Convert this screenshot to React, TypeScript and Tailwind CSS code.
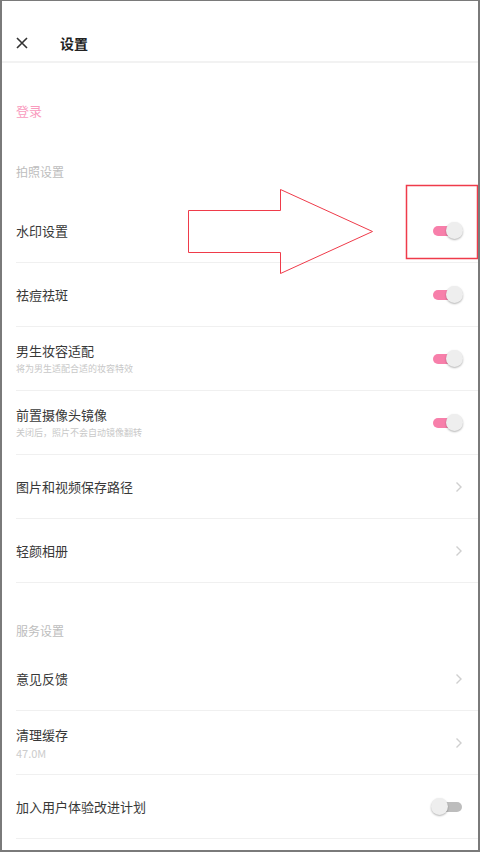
import React from "react";

const font = { fontFamily: '"Noto Sans CJK SC", "Noto Sans", sans-serif' };

function Toggle({ on }: { on: boolean }) {
  return (
    <div className="relative w-[32px] h-[18px] flex items-center">
      <div
        className={
          on
            ? "absolute left-[2px] right-[2px] h-[10px] rounded-full bg-[#f77faa]"
            : "absolute left-[4px] right-[1px] h-[10px] rounded-full bg-[#bdbdbd]"
        }
      />
      <div
        className={
          on
            ? "absolute right-[0px] w-[17px] h-[17px] rounded-full bg-[#eeeeee] shadow-[0_1px_2px_rgba(0,0,0,0.3)]"
            : "absolute left-[0px] w-[17px] h-[17px] rounded-full bg-[#eeeeee] shadow-[0_1px_2px_rgba(0,0,0,0.3)]"
        }
      />
    </div>
  );
}

function Chevron() {
  return (
    <svg width="8" height="12" viewBox="0 0 8 12" fill="none">
      <path d="M1.5 1.5 L6 6 L1.5 10.5" stroke="#cfcfcf" strokeWidth="1.4" />
    </svg>
  );
}

function Row({
  title,
  sub,
  subBig,
  right,
}: {
  title: string;
  sub?: string;
  subBig?: boolean;
  right: React.ReactNode;
}) {
  return (
    <div className="h-[64px] ml-[14px] border-b border-[#f0f0f0] flex items-center justify-between pr-[15px]">
      <div className="flex flex-col">
        <span className="text-[13px] leading-[18px] text-[#383838]">{title}</span>
        {sub && (
          <span
            className={
              subBig
                ? "text-[11px] leading-[14px] mt-[2px] text-[#cccccc]"
                : "text-[9px] leading-[14px] mt-[2px] text-[#c8c8c8]"
            }
          >
            {sub}
          </span>
        )}
      </div>
      {right}
    </div>
  );
}

export default function App() {
  return (
    <div
      className="relative w-[480px] h-[852px] bg-white border-l-2 border-r-2 border-t border-b-2 border-[#7a7a7a] overflow-hidden"
      style={font}
    >
      {/* header */}
      <div className="h-[62px] pt-[23px] border-b-2 border-[#f2f2f2]">
        <div className="h-[38px] flex items-center pl-[13px]">
          <svg width="14" height="14" viewBox="0 0 14 14">
            <path d="M2 2 L12 12 M12 2 L2 12" stroke="#333" strokeWidth="1.6" />
          </svg>
          <span className="ml-[31px] text-[14px] font-semibold text-[#222]">设置</span>
        </div>
      </div>

      <div className="pl-[14px] pt-[38px] text-[13px] leading-[20px] text-[#f99bbe]">登录</div>
      <div className="pl-[14px] pt-[41px] pb-[17px] text-[12px] leading-[20px] text-[#bdbdbd]">
        拍照设置
      </div>

      <Row title="水印设置" right={<Toggle on />} />
      <Row title="祛痘祛斑" right={<Toggle on />} />
      <Row title="男生妆容适配" sub="将为男生适配合适的妆容特效" right={<Toggle on />} />
      <Row title="前置摄像头镜像" sub="关闭后，照片不会自动镜像翻转" right={<Toggle on />} />
      <Row title="图片和视频保存路径" right={<Chevron />} />
      <Row title="轻颜相册" right={<Chevron />} />

      <div className="pl-[14px] pt-[38px] pb-[6px] text-[12px] leading-[20px] text-[#bdbdbd]">
        服务设置
      </div>
      <Row title="意见反馈" right={<Chevron />} />
      <Row title="清理缓存" sub="47.0M" subBig right={<Chevron />} />
      <Row title="加入用户体验改进计划" right={<Toggle on={false} />} />

      {/* annotations */}
      <svg
        className="absolute left-[-2px] top-[-1px]"
        width="480"
        height="852"
        viewBox="0 0 480 852"
        fill="none"
      >
        <path
          d="M188.5 210.5 H280.5 V189.5 L372.5 231.5 L280.5 273.5 V252.5 H188.5 Z"
          stroke="#ef3b4a"
          strokeWidth="1"
        />
        <rect x="406.5" y="185.5" width="71" height="73" stroke="#ef3b4a" strokeWidth="1.5" />
      </svg>
    </div>
  );
}
